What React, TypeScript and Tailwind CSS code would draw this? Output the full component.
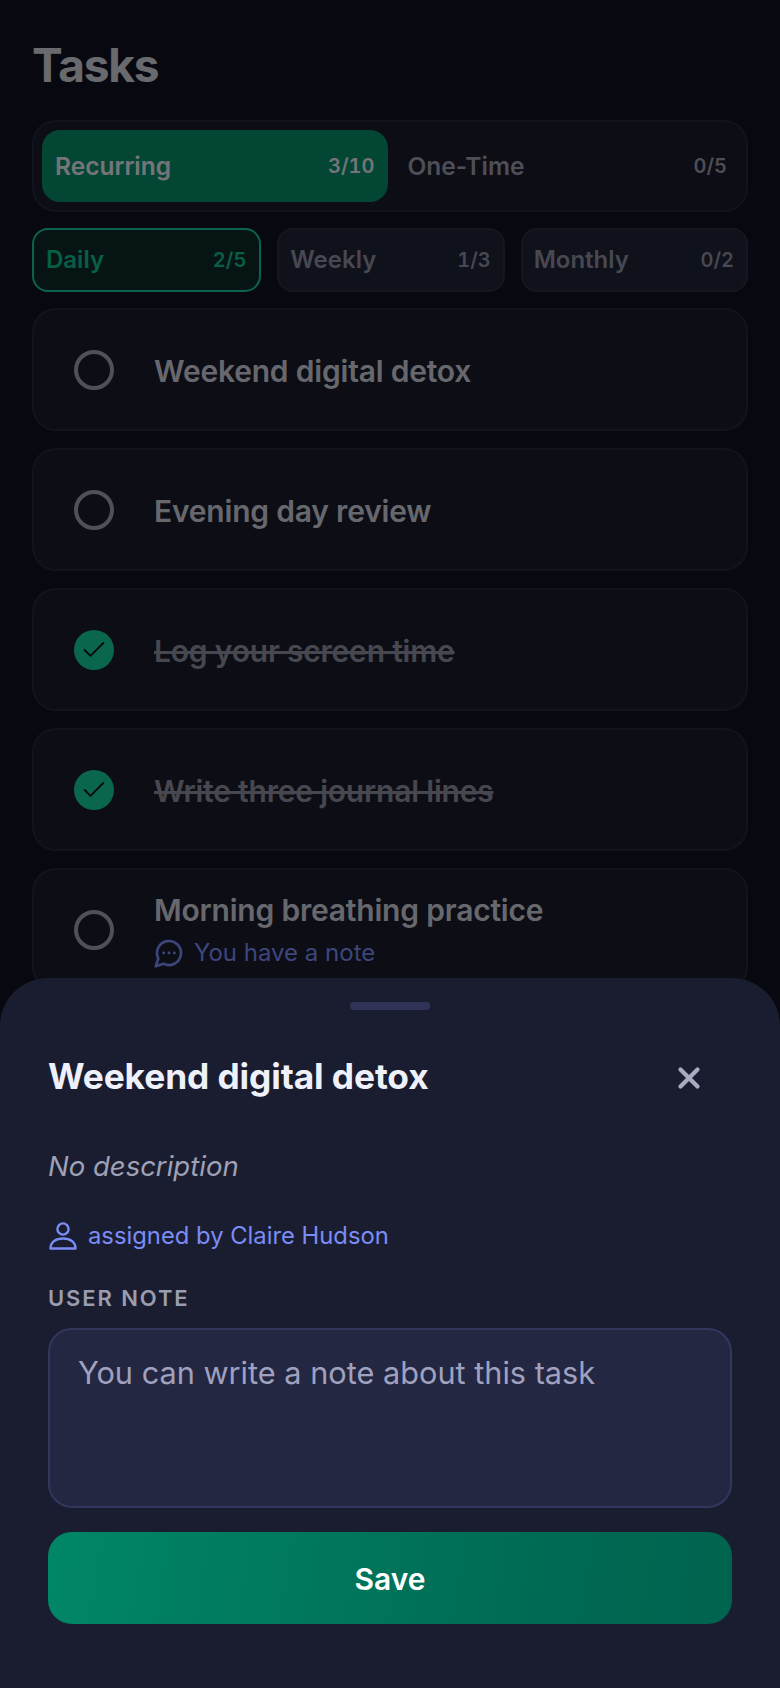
import { Check, X } from "lucide-react";

const font = { fontFamily: "Inter, 'Noto Sans', sans-serif" };

function Segment({ label, count, active }: { label: string; count: string; active?: boolean }) {
  return (
    <div className={active ? "flex flex-1 basis-0 items-center justify-between rounded-[18px] bg-[#078c66] pl-[13px] pr-[13px]" : "flex flex-1 basis-0 items-center justify-between rounded-[18px] pl-[20px] pr-[11px]"}>
      <span className={active ? "text-[24.5px] font-semibold text-[#e8eaf0]" : "text-[24.5px] font-semibold text-[#9a9cad]"}>{label}</span>
      <span className={active ? "text-[20px] font-semibold tabular-nums text-[#e8eaf0]" : "text-[20px] font-semibold tabular-nums text-[#9a9cad]"}>{count}</span>
    </div>
  );
}

function SubTab({ label, count, active }: { label: string; count: string; active?: boolean }) {
  return (
    <div className={active ? "flex h-[64px] flex-1 basis-0 items-center justify-between rounded-[16px] border-2 border-[#16c79a] bg-[#0d2a28] pl-[12px] pr-[13px]" : "flex h-[64px] flex-1 basis-0 items-center justify-between rounded-[16px] border-2 border-[#2a2d42] bg-[#1f2236] pl-[11px] pr-[12px]"}>
      <span className={active ? "text-[24px] font-semibold text-[#10bd8c]" : "text-[24px] font-semibold text-[#8e90a3]"}>{label}</span>
      <span className={active ? "text-[20px] font-semibold tabular-nums text-[#10bd8c]" : "text-[20px] font-semibold tabular-nums text-[#8e90a3]"}>{count}</span>
    </div>
  );
}

function NoteIcon() {
  return (
    <svg viewBox="0 0 24 24" className="-ml-[1px] h-[32px] w-[32px] text-[#7a8cf5]" fill="none" stroke="currentColor" strokeWidth="2" strokeLinecap="round" strokeLinejoin="round">
      <path d="M7.900 20A9 9 0 1 0 4 16.100L2 22Z" />
      <circle cx="8" cy="12" r="1.100" fill="currentColor" stroke="none" />
      <circle cx="12" cy="12" r="1.100" fill="currentColor" stroke="none" />
      <circle cx="16" cy="12" r="1.100" fill="currentColor" stroke="none" />
    </svg>
  );
}

function Task({ title, done, note }: { title: string; done?: boolean; note?: boolean }) {
  return (
    <div className="flex h-[123px] shrink-0 items-center gap-[40px] rounded-[24px] border-2 border-[#23263a] bg-[#181a2b] pl-[40px]">
      {done ? (
        <div className="flex h-[40px] w-[40px] items-center justify-center rounded-full bg-[#14ce9a]">
          <Check className="h-[28px] w-[28px] text-[#0d1020]" strokeWidth={1.6} />
        </div>
      ) : (
        <div className="h-[40px] w-[40px] rounded-full border-[4px] border-[#a0a2ae]" />
      )}
      <div className="flex flex-col pt-[3px]">
        <span className={done ? "text-[30px] font-semibold leading-[36px] tracking-[-0.2px] text-[#8c8e9e] line-through" : "text-[30px] font-semibold leading-[36px] tracking-[-0.2px] text-[#cfd1da]"}>{title}</span>
        {note && (
          <div className="mt-[7px] flex items-center gap-[9px]">
            <NoteIcon />
            <span className="text-[24px] text-[#7a8cf5]">You have a note</span>
          </div>
        )}
      </div>
    </div>
  );
}

export default function App() {
  return (
    <div style={font} className="relative h-[1688px] w-[780px] overflow-hidden bg-[#101220]">
      <div className="flex flex-col px-[32px]">
        <h1 className="mt-[36px] text-[46px] font-bold leading-[58px] tracking-[-1.2px] text-[#d3d4dc]">Tasks</h1>
        <div className="mt-[26px] flex h-[92px] rounded-[24px] border-2 border-[#23263a] bg-[#181a2b] p-[8px]">
          <Segment label="Recurring" count="3/10" active />
          <Segment label="One-Time" count="0/5" />
        </div>
        <div className="mt-[16px] flex gap-[16px]">
          <SubTab label="Daily" count="2/5" active />
          <SubTab label="Weekly" count="1/3" />
          <SubTab label="Monthly" count="0/2" />
        </div>
        <div className="mt-[16px] flex flex-col gap-[17px]">
          <Task title="Weekend digital detox" />
          <Task title="Evening day review" />
          <Task title="Log your screen time" done />
          <Task title="Write three journal lines" done />
          <Task title="Morning breathing practice" note />
        </div>
      </div>
      <div className="absolute inset-0 bg-black/50" />
      <div className="absolute bottom-0 left-0 right-0 flex h-[710px] flex-col rounded-t-[48px] bg-[#1a1d2f] px-[48px]">
        <div className="mx-auto mt-[24px] h-[8px] w-[80px] rounded-[4px] bg-[#2f3358]" />
        <div className="mt-[39px] flex items-center justify-between">
          <h2 className="text-[35.3px] font-bold leading-[56px] tracking-[-0.1px] text-[#eef0fa]">Weekend digital detox</h2>
          <X className="mr-[26px] mt-[2px] h-[34px] w-[34px] text-[#a9abc0]" strokeWidth={3} />
        </div>
        <p className="mt-[43px] text-[27.5px] italic leading-[36px] text-[#9fa1b6]">No description</p>
        <div className="mt-[34px] flex items-center gap-[11px]">
          <svg viewBox="0 0 28 28" className="ml-[1px] h-[28px] w-[28px] text-[#7a8cf5]" fill="none" stroke="currentColor" strokeWidth="2.4">
            <circle cx="14" cy="7" r="5.600" />
            <path d="M1.500 26.500c0-6.500 5.500-10 12.500-10s12.500 3.500 12.500 10z" strokeLinejoin="round" />
          </svg>
          <span className="text-[23.8px] leading-[36px] text-[#7a8cf5]">assigned by Claire Hudson</span>
        </div>
        <div className="mt-[30px] text-[22px] font-semibold leading-[28px] tracking-[1.9px] text-[#9a9cb0]">USER NOTE</div>
        <div className="mt-[16px] h-[180px] rounded-[24px] border-2 border-[#33375c] bg-[#242742] px-[28px] pb-[24px] pt-[24px] text-[30.7px] leading-[38px] text-[#9fa1bf]">
          You can write a note about this task
        </div>
        <div className="mt-[24px] flex h-[92px] items-center justify-center rounded-[24px] bg-[linear-gradient(100deg,#008767,#006b54_70%,#00634e)] pt-[2px] text-[30px] font-semibold text-white">
          Save
        </div>
      </div>
    </div>
  );
}
